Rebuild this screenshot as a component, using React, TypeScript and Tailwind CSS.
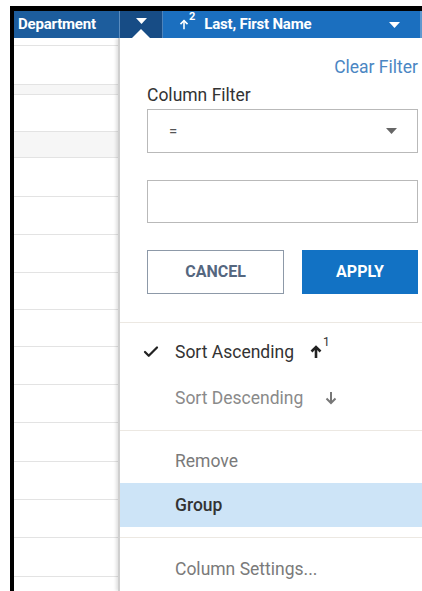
import { Check } from "lucide-react";

// grid rows behind the column menu: height in px, shaded or not
const rows: Array<{ h: number; shade?: boolean }> = [
  { h: 8 },
  { h: 39 },
  { h: 10, shade: true },
  { h: 37 },
  { h: 26, shade: true },
  { h: 39 },
  { h: 38 },
  { h: 38 },
  { h: 37 },
  { h: 37 },
  { h: 38 },
  { h: 38 },
  { h: 39 },
  { h: 38 },
  { h: 38 },
  { h: 39 },
];

function Caret({ className }: { className?: string }) {
  return (
    <svg width="11" height="6" viewBox="0 0 11 6" className={className}>
      <path d="M0 0h11L5.5 6z" fill="currentColor" />
    </svg>
  );
}

function Arrow({ down, w = 2, className }: { down?: boolean; w?: number; className?: string }) {
  return (
    <svg width="12" height="14" viewBox="0 0 12 14" className={className}>
      <g transform={down ? "rotate(180 6 7)" : undefined} fill="none" stroke="currentColor" strokeWidth={w}>
        <path d="M6 13V2" />
        <path d="M1.5 6.5L6 2l4.5 4.5" />
      </g>
    </svg>
  );
}

function Header() {
  return (
    <div className="flex h-[27px] text-white font-bold text-[15px]">
      <div className="flex w-[106px] items-center bg-[#1d5d9d] pl-[4px] border-r border-[#5a8cbf] tracking-[-0.2px]">
        Department
      </div>
      <div className="relative flex w-[43px] items-start justify-center bg-[#174c85] pt-[7px] border-r border-[#4d83bb]">
        <Caret />
        {/* notch pointing at the open menu */}
        <svg width="18" height="9" viewBox="0 0 18 9" className="absolute bottom-0 left-[12px]">
          <path d="M0 9L9 0l9 9z" fill="#ffffff" />
        </svg>
      </div>
      <div className="flex flex-1 items-center bg-[#1b6fbf] pl-[16px] pr-[20px] border-r-[2px] border-[#5f98cf]">
        <Arrow w={2} className="h-[11px] w-[10px]" />
        <sup className="text-[11px] -mt-[4px]">2</sup>
        <span className="ml-[9px] tracking-[-0.2px]">Last, First Name</span>
        <Caret className="ml-auto" />
      </div>
    </div>
  );
}

function Separator() {
  return <div className="h-px bg-[#ece8e2]" />;
}

function ColumnMenu() {
  return (
    <div className="flex-1 bg-white border-l-2 border-[#cfcfcf] shadow-[-2px_0_3px_rgba(0,0,0,0.12)] text-[17.5px]">
      <div className="pl-[27px] pr-[4px] pt-[19px]">
        <div className="text-right leading-[20px] text-[#4b86c3]">Clear Filter</div>
        <div className="mt-[8px] leading-[20px] text-[#333333]">Column Filter</div>
        <div className="mt-[4px] flex h-[44px] items-center border border-[#b9b9b9] pl-[21px] pr-[20px] text-[#555]">
          <span className="text-[15px]">=</span>
          <Caret className="ml-auto text-[#666]" />
        </div>
        <div className="mt-[27px] h-[43px] border border-[#b9b9b9]" />
        <div className="mt-[27px] flex h-[44px] gap-[18px] text-[16px] font-bold">
          <button className="w-[137px] border border-[#8d99a8] text-[#55677f]">CANCEL</button>
          <button className="flex-1 bg-[#1272c4] text-white">APPLY</button>
        </div>
      </div>
      <div className="mt-[28px]">
        <Separator />
      </div>
      <div className="mt-[19px] flex h-[20px] items-center text-[#333]">
        <Check size={18} strokeWidth={3} className="ml-[22px] w-[18px] text-[#222]" />
        <span className="ml-[15px]">Sort Ascending</span>
        <Arrow w={2.6} className="ml-[16px] text-[#222]" />
        <sup className="text-[12px] -mt-[8px] ml-[1px]">1</sup>
      </div>
      <div className="mt-[26px] flex h-[20px] items-center pl-[55px] text-[#8a8a8a]">
        <span>Sort Descending</span>
        <Arrow down w={2} className="ml-[22px] text-[#777]" />
      </div>
      <div className="mt-[22px]">
        <Separator />
      </div>
      <div className="mt-[20px] h-[20px] leading-[20px] pl-[55px] text-[#7a7a7a]">Remove</div>
      <div className="mt-[12px] flex h-[44px] items-center bg-[#cde4f7] pl-[55px] text-[#333] font-medium">
        Group
      </div>
      <div className="mt-[10px]">
        <Separator />
      </div>
      <div className="mt-[21px] h-[20px] leading-[20px] pl-[55px] text-[#7a7a7a]">Column Settings...</div>
    </div>
  );
}

export default function App() {
  return (
    <div className="h-[591px] w-[422px] overflow-hidden bg-white pt-[6px] pl-[10px] font-['Roboto',sans-serif]">
      <div className="flex h-full flex-col border-l-4 border-t-[5px] border-black">
        <Header />
        <div className="flex flex-1 overflow-hidden">
          <div className="w-[104px] shrink-0">
            {rows.map((r, i) => (
              <div
                key={i}
                style={{ height: r.h }}
                className={`border-b border-[#e3e3e3] ${r.shade ? "bg-[#f6f6f6]" : "bg-white"}`}
              />
            ))}
          </div>
          <ColumnMenu />
        </div>
      </div>
    </div>
  );
}
